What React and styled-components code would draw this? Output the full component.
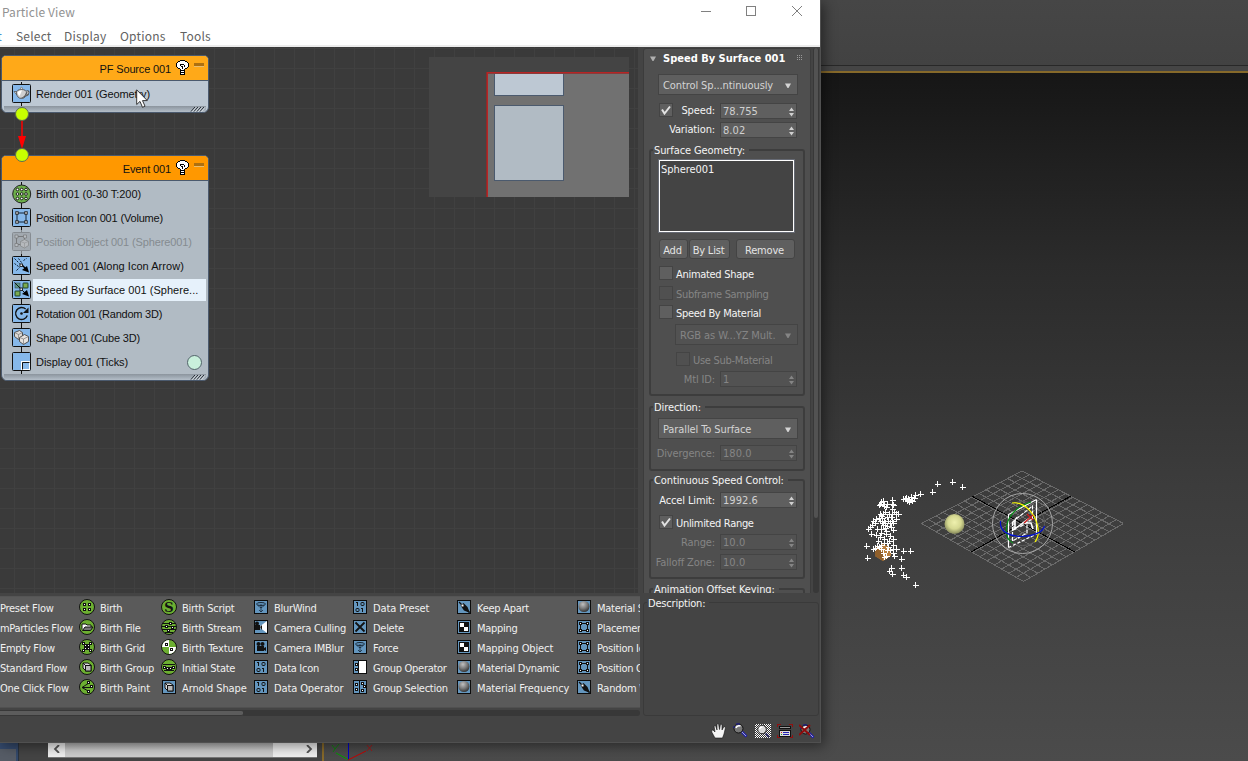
import React from "react";
import styled, { createGlobalStyle } from "styled-components";

const Global = createGlobalStyle`
  * { box-sizing: border-box; }
  html, body { margin: 0; padding: 0; overflow: hidden; background: #444; }
`;

const ui = `"DejaVu Sans Condensed", "Noto Sans", sans-serif`;

/* ---------- desktop behind the window ---------- */
const Desktop = styled.div`
  position: relative;
  width: 1248px;
  height: 761px;
  overflow: hidden;
  background: #444;
  display: flex;
  flex-direction: column;
`;
const TopStrip = styled.div`
  flex: none;
  height: 71px;
  background: linear-gradient(#464646 0, #424242 65px, #282828 65px, #282828 66px, #454545 66px);
`;
const Main = styled.div`
  flex: 1;
  display: flex;
  min-height: 0;
`;
const LeftDock = styled.div`
  width: 322px;
  display: flex;
  align-items: flex-end;
  background: #444;
`;
const DockPreview = styled.div`
  width: 18px;
  height: 18px;
  margin-right: 30px;
  background: #565c66;
  border: solid #34496b;
  border-width: 6px 2px 0 0;
  outline: 1px solid #28323f;
`;
const DockScroll = styled.div`
  width: 269px;
  height: 16px;
  margin-bottom: 4px;
  display: flex;
  background: #f0f0f0;
  box-shadow: 0 1px 0 #777;
`;
const DockArrow = styled.div`
  width: 17px;
  display: grid;
  place-items: center;
`;
const DockThumb = styled.div`
  width: 208px;
  background: linear-gradient(#aaa, #cdcdcd 9px);
`;
const DockTrack = styled.div`
  flex: 1;
`;
const Viewport = styled.div`
  flex: 1;
  border: solid #86692a;
  border-width: 2px 0 0 2px;
  background: linear-gradient(#161616, #2b2b2b 28%, #3c3c3c 60%, #4b4b4b);
`;

/* ---------- window ---------- */
const Window = styled.div`
  position: absolute;
  left: 0;
  top: 0;
  width: 821px;
  height: 743px;
  display: flex;
  flex-direction: column;
  background: #444;
  border-right: 1px solid #505050;
  border-bottom: 1px solid #505050;
  box-shadow: 3px 3px 12px rgba(0, 0, 0, 0.45);
  font-family: ${ui};
  font-size: 11px;
`;
const TitleBar = styled.div`
  height: 24px;
  background: #fff;
  display: flex;
  justify-content: space-between;
  padding-left: 2px;
  font: 12px/23px "Noto Sans CJK SC", "Noto Sans", sans-serif;
  color: #929292;
  letter-spacing: 0.1px;
`;
const WinButtons = styled.svg`
  width: 126px;
  height: 24px;
`;
const MenuBar = styled.div`
  height: 23px;
  background: #fff;
  border-bottom: 2px solid #ececec;
  display: flex;
  gap: 14px;
  font: 12px/24px "Noto Sans CJK SC", "Noto Sans", sans-serif;
  color: #626262;
  letter-spacing: 0.2px;
`;
const MenuItem = styled.span`
  width: ${(p) => p.$w}px;
  white-space: nowrap;
  display: flex;
  justify-content: ${(p) => p.$end ? "flex-end" : "flex-start"};
  color: ${(p) => p.$end ? "#4a90d0" : "inherit"};
`;
const Body = styled.div`
  height: 695px;
  display: flex;
`;
const LeftCol = styled.div`
  width: 640px;
  display: flex;
  flex-direction: column;
`;
const RightCol = styled.div`
  flex: 1;
  display: flex;
  flex-direction: column;
`;

/* ---------- event canvas ---------- */
const Canvas = styled.div`
  position: relative;
  width: 638px;
  height: 546px;
  overflow: hidden;
  background-color: #3a3a3a;
  background-image: linear-gradient(#404040 1px, transparent 1px), linear-gradient(90deg, #404040 1px, transparent 1px);
  background-size: 20px 20px;
  background-position: 14px 1px;
`;
const Node = styled.div`
  position: absolute;
  left: 1px;
  top: ${(p) => p.$y}px;
  width: 208px;
  border: 1px solid #4b5a6e;
  border-radius: 5px 5px 6px 6px;
  background: ${(p) => p.$bg};
  overflow: hidden;
  font: 11px "Liberation Sans", Arial, sans-serif;
  color: #111;
`;
const NodeHead = styled.div`
  height: 25px;
  display: flex;
  align-items: center;
  justify-content: flex-end;
  gap: 5px;
  padding: 0 4px 0 0;
  border-bottom: 1px solid #4b5a6e;
  background: ${(p) => p.$c};
`;
const NodeTitle = styled.span`
  padding-top: 2px;
  letter-spacing: -0.15px;
`;
const Collapse = styled.span`
  width: 10px;
  height: 4px;
  margin-bottom: 6px;
  background: linear-gradient(#ad7010 75%, #e8bd70 75%);
`;
const NodeRow = styled.div`
  height: 24px;
  display: flex;
  align-items: center;
  gap: 1px;
  padding-left: 10px;
  color: ${(p) => p.$off ? "#858b90" : "#111"};
`;
const NodeLabel = styled.span`
  height: 22px;
  line-height: 23px;
  padding-left: 3px;
  letter-spacing: ${(p) => p.$ls || 0}px;
  white-space: nowrap;
  flex: ${(p) => p.$sel ? "none" : 1};
  width: ${(p) => p.$sel ? "173px" : "auto"};
  background: ${(p) => p.$sel ? "#e6f1fb" : "transparent"};
`;
const ColorDot = styled.span`
  width: 15px;
  height: 15px;
  margin-right: 6px;
  border-radius: 50%;
  border: 1px solid #52646a;
  background: #c9f0dc;
`;
const NodeRows = styled.div`
  padding-top: 1px;
`;
const NodeFoot = styled.div`
  height: 6px;
  margin: 0 2px 0;
  background: linear-gradient(#8b949d, #a3adb7 60%, #b4bec8);
  display: flex;
  justify-content: flex-end;
`;
const Wire = styled.svg`
  position: absolute;
  left: 12px;
  top: 57px;
`;
const Pointer = styled.svg`
  position: absolute;
  left: 136px;
  top: 42px;
`;
const MiniMap = styled.svg`
  position: absolute;
  left: 429px;
  top: 10px;
`;

/* ---------- depot ---------- */
const Depot = styled.div`
  height: 112px;
  margin-top: 3px;
  padding-top: 1px;
  border-top: 1px solid #555;
  border-bottom: 1px solid #505050;
  background: #5a5a5a;
  overflow: hidden;
  display: grid;
  grid-template-columns: 79px 82px 92px 99px 104px 120px 64px;
  grid-auto-flow: column;
  grid-template-rows: repeat(5, 20px);
`;
const DepotItem = styled.div`
  display: flex;
  align-items: center;
  gap: 5px;
  overflow: hidden;
  white-space: nowrap;
  color: #f0f0f0;
`;
const DepotText = styled.span`
  letter-spacing: ${(p) => p.$wide ? -0.12 : -0.28}px;
`;
const DepotIcon = styled.svg`
  width: 16px;
  height: 16px;
  margin-bottom: 2px;
  flex: none;
`;
const HScroll = styled.div`
  height: 6px;
  margin-top: 2px;
  background: #383838;
  border-radius: 0 3px 3px 0;
`;
const HThumb = styled.div`
  width: 243px;
  height: 6px;
  border: solid #383838;
  border-width: 1px 0;
  border-radius: 0 2px 2px 0;
  background: #5c5c5c;
`;

/* ---------- rollouts ---------- */
const RollArea = styled.div`
  height: 546px;
  display: flex;
  gap: 2px;
  padding: 1px 1px 0 3px;
  overflow: hidden;
`;
const Rollout = styled.div`
  width: 168px;
  flex: none;
  height: 560px;
  padding: 0 5px;
  border: 1px solid #3c3c3c;
  border-radius: 3px;
  background: #4f4f4f;
  color: #f2f2f2;
  letter-spacing: -0.3px;
`;
const RollHead = styled.div`
  height: 20px;
  display: flex;
  align-items: center;
  padding: 0 2px 2px 1px;
  gap: 7px;
  color: #b0b0b0;
`;
const RollTitle = styled.span`
  flex: 1;
  white-space: nowrap;
  font-weight: bold;
  color: #fff;
  letter-spacing: 0;
`;
const VScroll = styled.div`
  width: 6px;
  height: 545px;
  background: #383838;
  border-radius: 3px;
`;
const VThumb = styled.div`
  height: 470px;
  margin: 0 1px;
  border-radius: 2px;
  background: #525252;
`;
const Line = styled.div`
  height: ${(p) => p.$h || 16}px;
  margin: ${(p) => p.$mt || 0}px 7px 0 ${(p) => p.$ml || 10}px;
  display: flex;
  align-items: center;
  gap: ${(p) => p.$gap ?? 4}px;
  white-space: nowrap;
  color: ${(p) => p.$off ? "#858585" : "#f4f4f4"};
`;
const Label = styled.span`
  flex: 1;
  text-align: right;
  letter-spacing: -0.13px;
  padding: 0 1px ${(p) => p.$up ? 2 : 0}px 0;
  margin-left: -4px;
`;
const FieldBox = styled.div`
  width: 77px;
  height: 16px;
  flex: none;
  display: flex;
  align-items: center;
  justify-content: space-between;
  padding: 1px 2px 0 2px;
  margin-right: 1px;
  border: 1px solid #444;
  background: ${(p) => p.$off ? "#525252" : "#5f5f5f"};
  color: ${(p) => p.$off ? "#858585" : "#d0d0d0"};
  letter-spacing: 0.05px;
`;
const SelectBox = styled.div`
  flex: 1;
  height: 21px;
  display: flex;
  align-items: center;
  justify-content: space-between;
  padding: 1px 6px 0 4px;
  border: 1px solid #444;
  background: ${(p) => p.$off ? "#525252" : "#5f5f5f"};
  color: ${(p) => p.$off ? "#858585" : "#d4d4d4"};
  letter-spacing: -0.1px;
`;
const CheckBox = styled.span`
  width: 14px;
  height: 14px;
  flex: none;
  margin-bottom: ${(p) => p.$up ? 2 : 0}px;
  border: 1px solid #444;
  background: ${(p) => p.$off ? "#505050" : "#5f5f5f"};
  display: grid;
  place-items: center;
`;
const CheckText = styled.span`
  padding-top: 2px;
`;
const Group = styled.div`
  height: ${(p) => p.$h}px;
  margin-top: ${(p) => p.$mt}px;
  border: 2px solid #3d3d3d;
  border-radius: 3px;
`;
const GroupTitle = styled.div`
  width: fit-content;
  height: 14px;
  line-height: 16px;
  margin: -8px 0 0 2px;
  padding: 0 4px 0 1px;
  white-space: nowrap;
  background: #4f4f4f;
  color: #f4f4f4;
  letter-spacing: -0.1px;
`;
const DescriptionTitle = styled(GroupTitle)`
  margin-left: 3px;
  line-height: 18px;
  background: #444;
  letter-spacing: -0.2px;
`;
const GroupBody = styled.div`
  margin: 0 -2px;
`;
const ListBox = styled.div`
  height: 74px;
  margin: 2px 10px 0 9px;
  padding: 2px 1px;
  border: 2px solid #fff;
  outline: 1px solid #666a74;
  outline-offset: -1px;
  background: #444;
  color: #f4f4f4;
  letter-spacing: -0.05px;
`;
const Button = styled.div`
  width: ${(p) => p.$w}px;
  height: 20px;
  flex: none;
  margin-right: ${(p) => p.$mr || 0}px;
  padding: 2px 2px 0 0;
  display: grid;
  place-items: center;
  border: 1px solid #444;
  border-radius: 3px;
  background: #5f5f5f;
  color: #e4e4e4;
  letter-spacing: -0.2px;
`;
const Description = styled.div`
  height: 114px;
  margin: 9px 1px 0 3px;
  border: 1px solid #3a3a3a;
  border-radius: 3px;
`;
const Tools = styled.div`
  display: flex;
  justify-content: flex-end;
  gap: 6px;
  padding: 7px 5px 0 0;
`;

/* ---------- small drawings ---------- */
const Bulb = () => (
  <svg width="13" height="16" viewBox="0 0 13 16" shapeRendering="crispEdges">
    <path d="M4 0H9V1H11V2H12V3H13V7H12V8H11V9H9V15H4V9H2V8H1V7H0V3H1V2H2V1H4Z" fill="#000" />
    <path d="M4 1H9V2H11V3H12V7H11V8H9V9H4V8H2V7H1V3H2V2H4Z" fill="#fff" />
    <path d="M5 9H8V10H5ZM5 11H8V12H5ZM5 13H8V14H5Z" fill="#fff" />
    <path d="M4 4H5V6H4ZM5 4H8V5H5ZM8 5H9V7H8ZM5 6H7V9H6V7H5Z" fill="#000" />
  </svg>
);
const Grip = () => (
  <svg width="16" height="6" viewBox="0 0 16 6">
    {[1, 4, 7, 10].map((x) => (
      <g key={x}>
        <path d={`M${x} 5.5L${x + 4} 1`} stroke="#222a33" strokeWidth="1" />
        <path d={`M${x + 1.2} 5.7L${x + 5.2} 1.2`} stroke="#e8edf2" strokeWidth=".8" />
      </g>
    ))}
  </svg>
);
const Corner = ({ x, y }) => <rect x={x - 1} y={y - 1} width="2.4" height="2.4" fill="#fff" stroke="#111" strokeWidth=".9" />;
const opArt = {
  render: (
    <g>
      <path d="M14.500 8.500C17.500 6.500 18 10 14.500 12" fill="none" stroke="#555" strokeWidth="2.200" />
      <path d="M14.500 8.500C17 7.200 17.300 10 14.500 11.500" fill="none" stroke="#e8e8e8" />
      <path d="M5.500 11.500L2.500 8H4.500L6.500 9Z" fill="#eee" stroke="#444" strokeWidth=".7" />
      <path d="M5 9.500C5 7 7 6 10 6S15 7 15 9.500C15 12.500 13 15 10 15S5 12.500 5 9.500Z" fill="#cfcfcf" stroke="#444" strokeWidth=".8" />
      <path d="M6 8.500Q8 6.500 10.500 7L8 12.500Q6 11 6 8.500Z" fill="#fff" />
      <path d="M9 14.500Q13 13.500 14.600 9Q15 15 9 14.500Z" fill="#555" />
      <path d="M7 6.500Q10 4.500 13 6.500Z" fill="#777" /><circle cx="10" cy="4.800" r="1" fill="#eee" stroke="#444" strokeWidth=".5" />
    </g>
  ),
  posicon: <g><path d="M5.500 5.500H14.500V14.500H5.500Z" fill="none" stroke="#123" /><Corner x={5.3} y={5.3} /><Corner x={14.3} y={5.3} /><Corner x={5.3} y={14.3} /><Corner x={14.3} y={14.3} /></g>,
  posobj: <g opacity=".7"><path d="M5 5H13V13H5Z" fill="none" stroke="#666" /><path d="M3.500 3.500h3v3h-3zM12 3.500h3v3h-3zM3.500 12h3v3h-3z" fill="#c4c8cc" stroke="#666" strokeWidth=".7" /><path d="M9 10L13 8L17 10V14L13 16.500L9 14.500Z" fill="#bfc1c3" stroke="#777" strokeWidth=".7" /><path d="M9 10L13 11.500L17 10M13 11.500V16" fill="none" stroke="#888" strokeWidth=".6" /></g>,
  speed: <g><path d="M3 3L8 8M7 3L10 7M3 8L7 11M12 5L15 3M5 15L8 12" stroke="#123" strokeDasharray="2 1" /><path d="M10 9L14 13" stroke="#000" strokeWidth="1.500" /><path d="M17.500 17L10.500 14.500L15.500 10.500Z" fill="#000" /><Corner x={9.5} y={9.5} /></g>,
  surf: <g><rect x="3.500" y="3.500" width="5" height="5" fill="#5d9a88" stroke="#345" strokeWidth=".6" /><rect x="11.500" y="3.500" width="5" height="5" rx=".5" fill="#7cab50" stroke="#132" strokeWidth=".9" /><rect x="3.500" y="11.500" width="5" height="5" rx=".5" fill="#7cab50" stroke="#132" strokeWidth=".9" /><path d="M3 3L14 14" stroke="#111" /><path d="M17.500 17L10.500 14.500L15.500 10.500Z" fill="#000" /><Corner x={9.5} y={9.5} /></g>,
  rot: <g><path d="M14.200 5.500A6 6 0 1 0 15.800 12" fill="none" stroke="#111" strokeWidth="1.400" /><path d="M17 4V9.500H11.500Z" fill="#111" /><circle cx="10" cy="10" r="1.300" fill="#111" /></g>,
  shape: <g><path d="M3 5L8 3L11 5V10L7 12L3 9Z" fill="#dedad6" stroke="#444" strokeWidth=".9" /><path d="M3 5L7 7L11 5M7 7V12" stroke="#777" fill="none" strokeWidth=".7" /><path d="M8 10L13 7L17 9V14L12 17L8 14Z" fill="#e6e2de" stroke="#444" strokeWidth=".9" /><path d="M8 10L12 11.500L17 9M12 11.500V17" stroke="#777" fill="none" strokeWidth=".7" /></g>,
  display: <g><rect x="10" y="10" width="8" height="8" fill="#8abaeb" stroke="#fff" /><path d="M11 18V11H18" fill="none" stroke="#111" /></g>,
};
const OpIcon = ({ kind }) => {
  const off = kind === "posobj";
  return (
    <svg width="20" height="24" viewBox="0 -2 20 24">
      <path d="M9.500 -2V1M9.500 19V22" stroke={off ? "#7d8286" : "#111"} />
      {kind === "birth" ? (
        <g>
          <circle cx="9.700" cy="10" r="9" fill="#6cae4a" stroke="#222" />
          {[5.5, 9.7, 14].flatMap((x) => [5.5, 10, 14.5].map((y) => <circle key={x + "-" + y} cx={x} cy={y} r="1.300" fill="#fff" stroke="#111" strokeWidth=".9" />))}
        </g>
      ) : (
        <g>
          <rect x=".5" y=".5" width="18" height="18" rx="1" fill={off ? "#a2a9b0" : "#86b8ea"} stroke={off ? "#868c92" : "#111"} />
          <g transform="translate(-.5 -.5)">{opArt[kind]}</g>
        </g>
      )}
    </svg>
  );
};

const sq = (x, y) => <rect key={x + "," + y} x={x} y={y} width="3" height="3" fill="#111" />;
const dot = (x, y) => <g key={x + "." + y}>{sq(x, y)}<rect x={x + 1} y={y + 1} width="1" height="1" fill="#fff" /></g>;
const cube = <g><path d="M4 4H9L12 6V12H7L4 9Z" fill="#ddd" stroke="#111" /><rect x="6.500" y="6.500" width="5.500" height="5.500" fill="#b8b8b8" stroke="#111" /><path d="M4 4L6.500 6.500" stroke="#111" /></g>;
const force = <g stroke="#182838" fill="none"><ellipse cx="8" cy="5" rx="4.500" ry="1.500" /><path d="M4.500 6L7 8.500H9L11.500 6M8 5V13M6 11L8 13L10 11" strokeWidth=".8" /></g>;
const bits = <g stroke="#111" fill="none"><path d="M5.500 3V7M4 3.500H5.500M10.500 9V13M9 9.500H10.500" /><rect x="9" y="3.500" width="3" height="3" rx=".8" /><rect x="4" y="9.500" width="3" height="3" rx=".8" /></g>;
const cam = <g fill="#111"><rect x="4" y="7" width="7" height="5" /><circle cx="5.500" cy="5" r="2" /><circle cx="9.500" cy="5" r="2" /><path d="M11 9L13 8V12L11 11Z" /></g>;
const arrow = <g><path d="M3 3L13.500 13.500" stroke="#111" strokeWidth="1.300" /><path d="M4.500 6.500L7.500 4L11.500 8L14 14L8 11.500Z" fill="#111" /><rect x="5.500" y="5.500" width="2" height="2" fill="#fff" /></g>;
const depotArt = {
  birth: [[4, 4], [9, 4], [4, 9], [9, 9]].map(([x, y]) => dot(x, y)),
  file: <g><path d="M3 10.500V5H7L8 6H12V8" fill="#fff" stroke="#111" /><path d="M3.500 11.500L6 8H14L11.500 11.500Z" fill="#777" stroke="#111" /></g>,
  grid: <g>{[[3, 3], [10, 3], [5, 5], [8, 5], [5, 8], [8, 8], [3, 10], [10, 10]].map(([x, y]) => dot(x, y))}</g>,
  cube,
  paint: <g><path d="M3 8.500L10 4M3 8.500H11M3 8.500L10 12.500" stroke="#111" />{dot(8, 2)}{dot(11, 6)}{dot(8, 11)}</g>,
  script: <text x="8" y="12.800" textAnchor="middle" fontFamily="DejaVu Serif, serif" fontWeight="bold" fontSize="13" fill="#111">S</text>,
  stream: <g><path d="M2 4.500H14M1 7.500H15M1 10.500H15M4 13.500H12" stroke="#111" />{dot(8, 3)}{dot(4, 6)}{dot(10, 7)}{dot(6, 10)}</g>,
  texture: <g><path d="M8 1A7 7 0 0 0 1 8H8ZM8 15A7 7 0 0 0 15 8H8Z" fill="#fff" />{dot(4, 4)}{dot(9, 9)}</g>,
  state: <g><path d="M2 5.500H14M2 8.500H14M3 11.500H13" stroke="#111" />{dot(2, 7)}{dot(5, 8)}{dot(8, 8)}{dot(11, 7)}</g>,
  force, bits, cam, arrow,
  cull: <g><path d="M6 8L14 2V14Z" fill="#fff" /><path d="M2 6H7V11H2Z" fill="#111" /><circle cx="4" cy="4.500" r="2" fill="#111" /><path d="M7 8L9 6V11Z" fill="#111" /></g>,
  del: <path d="M3.500 3.500L12.500 12.500M12.500 3.500L3.500 12.500" stroke="#111" strokeWidth="1.800" />,
  gop: <g><rect x="7" y="2" width="7" height="12" fill="#fff" /><path d="M6.500 1V15" stroke="#111" />{dot(3, 4)}{dot(3, 9)}</g>,
  gsel: <g><path d="M7.500 1V15" stroke="#111" />{dot(3, 4)}{dot(3, 9)}{dot(9, 3)}{dot(11, 6)}{dot(9, 10)}</g>,
  map: <g><rect x="3" y="3" width="10" height="10" fill="#111" /><rect x="4" y="4" width="4" height="4" fill="#fff" /><rect x="8" y="8" width="4" height="4" fill="#fff" /></g>,
  ball: <circle cx="8" cy="7.500" r="5.500" fill="url(#metal)" />,
  pos: <g><rect x="4.500" y="4.500" width="7" height="7" fill="none" stroke="#111" />{dot(3, 3)}{dot(10, 3)}{dot(3, 10)}{dot(10, 10)}</g>,
};
const DIcon = ({ kind, round }) => (
  <DepotIcon viewBox="0 0 16 16">
    {round ? <circle cx="8" cy="8" r="7.500" fill="#6cae31" stroke="#111" /> : <rect x="1.500" y="1.500" width="13" height="13" fill="#6496be" stroke="#0c0c0c" />}
    {depotArt[kind]}
  </DepotIcon>
);
const depot = [
  ["Preset Flow"], ["mParticles Flow"], ["Empty Flow"], ["Standard Flow"], ["One Click Flow"],
  ["Birth", "birth", 1], ["Birth File", "file", 1], ["Birth Grid", "grid", 1], ["Birth Group", "cube", 1], ["Birth Paint", "paint", 1],
  ["Birth Script", "script", 1], ["Birth Stream", "stream", 1], ["Birth Texture", "texture", 1], ["Initial State", "state", 1], ["Arnold Shape", "cube"],
  ["BlurWind", "force"], ["Camera Culling", "cull"], ["Camera IMBlur", "cam"], ["Data Icon", "bits"], ["Data Operator", "bits"],
  ["Data Preset", "bits"], ["Delete", "del"], ["Force", "force"], ["Group Operator", "gop"], ["Group Selection", "gsel"],
  ["Keep Apart", "arrow"], ["Mapping", "map"], ["Mapping Object", "map"], ["Material Dynamic", "ball"], ["Material Frequency", "ball"],
  ["Material Static", "ball"], ["Placement Paint", "pos"], ["Position Icon", "pos"], ["Position Object", "pos"], ["Random Walk", "arrow"],
];
const wideNames = new Set(["Birth Texture", "Arnold Shape", "Data Operator", "Data Preset", "Mapping Object", "Material Frequency", "Birth Paint"]);

const Spin = () => (
  <svg width="5" height="10" viewBox="0 0 5 10"><path d="M0 4L2.500 .5L5 4ZM0 6L2.500 9.500L5 6Z" fill="currentColor" /></svg>
);
const Down = () => (
  <svg width="6" height="5" viewBox="0 0 6 5"><path d="M0 .5H6L3.500 5H2.500Z" fill="currentColor" /></svg>
);
const Field = ({ label, value, off, mt, pre, up }) => (
  <Line $mt={mt} $off={off}>
    {pre}
    <Label $up={up}>{label}</Label>
    <FieldBox $off={off}>{value}<Spin /></FieldBox>
  </Line>
);
const Select = ({ text, off, mt, ml }) => (
  <Line $mt={mt} $h={21} $ml={ml || 9}>
    <SelectBox $off={off}>{text}<Down /></SelectBox>
  </Line>
);
const Tick = () => (
  <svg width="10" height="10" viewBox="0 0 10 10"><path d="M1 4.500L3.500 8.500L9 1.500" fill="none" stroke="#e2e2e2" strokeWidth="2" /></svg>
);
const Check = ({ label, on, off, mt, ml }) => (
  <Line $mt={mt} $ml={ml} $h={14} $off={off} $gap={3}>
    <CheckBox $off={off}>{on && <Tick />}</CheckBox>
    <CheckText>{label}</CheckText>
  </Line>
);

/* ---------- 3D viewport ---------- */
const marks = [
  [937, 484], [952, 482], [962, 487], [932, 492], [920, 494], [915, 495], [911, 497], [908, 499], [905, 499], [903, 499], [911, 500], [907, 501], [912, 501], [909, 502], [906, 498], [914, 498],
  [892, 500], [881, 502], [880, 504], [883, 504], [887, 504], [892, 504], [884, 506], [893, 505], [879, 505], [892, 509], [883, 501], [886, 507],
  [880, 514], [883, 514], [885, 512], [889, 514], [892, 514], [896, 514], [898, 514], [894, 512], [881, 516], [887, 517], [891, 517], [882, 518], [879, 518],
  [873, 521], [876, 519], [880, 521], [884, 521], [888, 521], [892, 521], [896, 519], [875, 523], [882, 523], [885, 523], [890, 523], [893, 523], [872, 525], [883, 525], [887, 526], [891, 527],
  [868, 529], [870, 527], [877, 529], [881, 529], [885, 528], [886, 531], [881, 533], [893, 530], [871, 534], [886, 534], [890, 536], [880, 537], [876, 535], [884, 539], [893, 539], [889, 541], [887, 543], [878, 541],
  [866, 546], [873, 549], [875, 548], [877, 546], [881, 545], [884, 543], [888, 547], [893, 545], [890, 550], [879, 547], [881, 549], [883, 553], [884, 557], [887, 550], [886, 556],
  [893, 549], [896, 549], [903, 551], [910, 551], [867, 558], [893, 553], [894, 556], [901, 559], [891, 568], [889, 571], [892, 574], [901, 568], [903, 575], [906, 577], [915, 585],
];
const mix = (a, b, t) => [a[0] + (b[0] - a[0]) * t, a[1] + (b[1] - a[1]) * t];
const L = [921.5, 523.5], T = [1022, 471], R = [1123.5, 523.5], B = [1023.5, 581.5];
const gridPath = Array.from({ length: 15 }, (_, i) => {
  const t = i / 14;
  const a = mix(L, T, t), b = mix(B, R, t), c = mix(T, R, t), d = mix(L, B, t);
  return `M${a}L${b}M${c}L${d}`;
}).join("");
const Scene = () => (
  <svg width="924" height="688" viewBox="324 73 924 688">
    <defs>
      <radialGradient id="ball" cx=".5" cy=".42" r=".6"><stop offset="0" stopColor="#eef0ae" /><stop offset=".55" stopColor="#d5d891" /><stop offset="1" stopColor="#7d8054" /></radialGradient>
      <radialGradient id="metal" cx=".4" cy=".3" r=".8"><stop offset="0" stopColor="#c0c0c0" /><stop offset=".5" stopColor="#777" /><stop offset="1" stopColor="#222" /></radialGradient>
    </defs>
    <path d={gridPath} stroke="#6a6a6a" fill="none" shapeRendering="crispEdges" />
    <path d="M972.500 496.500L1075 552M1071 496L971 552" stroke="#000" shapeRendering="crispEdges" />
    <circle cx="954.500" cy="524" r="10" fill="url(#ball)" />
    <path d="M875 548L883 543.500L891 548V556L883 561L875 556Z" fill="#b9803f" />
    <path d="M875 548L883 552V561L875 556Z" fill="#8f5f2b" />
    <path d={marks.map(([x, y]) => `M${x - 2} ${y + 0.5}h6M${x + 0.5} ${y - 3}v6`).join("")} stroke="#fff" shapeRendering="crispEdges" />
    <circle cx="1022.500" cy="523.500" r="30" fill="none" stroke="#a8a8a8" />
    <circle cx="1022.500" cy="523.500" r="22" fill="none" stroke="#5c5c5c" />
    <g fill="none" strokeWidth="1.200">
      <path d="M1036.500 499.500V534.500M1036.500 499.500L1008.500 514.500V547.500" stroke="#fff" />
      <path d="M1008.500 547.500L1036.500 534" stroke="#fff" strokeDasharray="3 2" />
      <path d="M1012.500 522L1032.500 506V520M1012.500 522V541L1027 533V524M1014 530V521L1018 516M1032 519L1020 527" stroke="#fff" strokeDasharray="4 1" />
      <path d="M1013 530L1030 518M1026 523H1031L1033 529M1015 520V530" stroke="#fff" strokeWidth="1.600" />
      <path d="M1031 502Q1014 507 1008 521Q1003 538 1013 543" stroke="#008b12" />
      <path d="M1012 503Q1024 501 1034 516Q1042 533 1035 542" stroke="#ff0" />
      <path d="M1000.500 521V525Q1003 536 1022 536.500Q1042 535 1044.500 526" stroke="#0010d0" />
      <path d="M1024 523L1033 515M1027 514L1033 520" stroke="#d01818" />
    </g>
    <path d="M348.500 741V760" stroke="#0000c8" />
    <path d="M348 759.500L336 753" stroke="#00a000" />
    <path d="M348 760L366 751" stroke="#c80000" />
    <path d="M332 745L335 749L339 744M335 749L333 752" stroke="#108010" fill="none" />
    <path d="M367 745L372 751M372 745L367 751" stroke="#a01818" />
  </svg>
);

const ToolIcon = styled.svg`
  width: 16px;
  height: 16px;
`;
const Lens = ({ x = 0, y = 0 }) => (
  <g transform={`translate(${x} ${y})`}>
    <circle cx="5.500" cy="5.500" r="4.500" fill="#777" stroke="#111" />
    <path d="M3 5Q4 2 7.500 3" stroke="#fff" strokeWidth="1.600" fill="none" />
    <path d="M3 1H7M1 3V5" stroke="#1818a0" />
    <path d="M9 9L13.500 13.500" stroke="#2020b0" strokeWidth="2.500" />
    <path d="M9 9L13 13" stroke="#ccc" strokeWidth=".8" />
  </g>
);

export default function App() {
  return (
    <>
      <Global />
      <Desktop>
        <TopStrip />
        <Main>
          <LeftDock>
            <DockPreview />
            <DockScroll>
              <DockArrow><svg width="8" height="8" viewBox="0 0 8 8"><path d="M6 0L2 4L6 8" stroke="#555" strokeWidth="1.800" fill="none" /></svg></DockArrow>
              <DockThumb />
              <DockTrack />
              <DockArrow><svg width="8" height="8" viewBox="0 0 8 8"><path d="M2 0L6 4L2 8" stroke="#555" strokeWidth="1.800" fill="none" /></svg></DockArrow>
            </DockScroll>
          </LeftDock>
          <Viewport><Scene /></Viewport>
        </Main>

        <Window>
          <TitleBar>
            Particle View
            <WinButtons viewBox="0 0 126 24" fill="none" stroke="#808080" shapeRendering="crispEdges">
              <path d="M7 11.500H17" />
              <rect x="52.500" y="6.500" width="9" height="9" />
              <path d="M98 6L108 16M108 6L98 16" shapeRendering="auto" />
            </WinButtons>
          </TitleBar>
          <MenuBar>
            <MenuItem $w={2} $end>t</MenuItem>
            <MenuItem $w={34}>Select</MenuItem>
            <MenuItem $w={42}>Display</MenuItem>
            <MenuItem $w={46}>Options</MenuItem>
            <MenuItem $w={36}>Tools</MenuItem>
          </MenuBar>
          <Body>
            <LeftCol>
              <Canvas>
                <Node $y={8} $bg="#bdc8d3">
                  <NodeHead $c="#ffa918"><NodeTitle>PF Source 001</NodeTitle><Bulb /><Collapse /></NodeHead>
                  <NodeRows>
                    <NodeRow><OpIcon kind="render" /><NodeLabel $ls={-0.1}>Render 001 (Geometry)</NodeLabel></NodeRow>
                  </NodeRows>
                  <NodeFoot><Grip /></NodeFoot>
                </Node>
                <Node $y={108} $bg="#b1bbc4">
                  <NodeHead $c="#ff9800"><NodeTitle>Event 001</NodeTitle><Bulb /><Collapse /></NodeHead>
                  <NodeRows>
                    <NodeRow><OpIcon kind="birth" /><NodeLabel $ls={-0.05}>Birth 001 (0-30 T:200)</NodeLabel></NodeRow>
                    <NodeRow><OpIcon kind="posicon" /><NodeLabel $ls={-0.17}>Position Icon 001 (Volume)</NodeLabel></NodeRow>
                    <NodeRow $off><OpIcon kind="posobj" /><NodeLabel $ls={-0.12}>Position Object 001 (Sphere001)</NodeLabel></NodeRow>
                    <NodeRow><OpIcon kind="speed" /><NodeLabel $ls={0.04}>Speed 001 (Along Icon Arrow)</NodeLabel></NodeRow>
                    <NodeRow><OpIcon kind="surf" /><NodeLabel $sel $ls={0.03}>Speed By Surface 001 (Sphere...</NodeLabel></NodeRow>
                    <NodeRow><OpIcon kind="rot" /><NodeLabel $ls={-0.22}>Rotation 001 (Random 3D)</NodeLabel></NodeRow>
                    <NodeRow><OpIcon kind="shape" /><NodeLabel $ls={-0.16}>Shape 001 (Cube 3D)</NodeLabel></NodeRow>
                    <NodeRow><OpIcon kind="display" /><NodeLabel $ls={-0.05}>Display 001 (Ticks)</NodeLabel><ColorDot /></NodeRow>
                  </NodeRows>
                  <NodeFoot><Grip /></NodeFoot>
                </Node>
                <Wire width="20" height="62" viewBox="0 0 20 62">
                  <path d="M10 16V40" stroke="#f00" strokeWidth="1.500" />
                  <path d="M6 32H14L10 45Z" fill="#f00" />
                  <circle cx="10" cy="10" r="6.500" fill="#c8ff00" stroke="#5d6b52" />
                  <circle cx="10" cy="51" r="6.500" fill="#c8ff00" stroke="#5d6b52" />
                </Wire>
                <MiniMap width="200" height="140" viewBox="0 0 200 140" shapeRendering="crispEdges">
                  <rect width="200" height="140" fill="#444" />
                  <rect x="58" y="16" width="142" height="124" fill="#717171" />
                  <rect x="65.500" y="16.500" width="69" height="22" fill="#bdc8d3" stroke="#4b5a6e" />
                  <rect x="65.500" y="48.500" width="69" height="75" fill="#b1bbc4" stroke="#4b5a6e" />
                  <rect x="58" y="15" width="142" height="1" fill="#b82424" />
                  <rect x="58" y="16" width="142" height="1" fill="#8a3a3a" />
                  <rect x="57" y="15" width="1" height="125" fill="#8a2c2c" />
                  <rect x="58" y="15" width="1" height="125" fill="#b82424" />
                </MiniMap>
                <Pointer width="13" height="20" viewBox="0 0 13 20">
                  <path d="M.7 .8V15.500L4 12.400L6.500 18.300L9 17.200L6.500 11.600H11.300Z" fill="#fff" stroke="#222" strokeWidth=".9" />
                </Pointer>
              </Canvas>
              <Depot>
                {depot.map(([name, kind, round]) => (
                  <DepotItem key={name}>
                    {kind && <DIcon kind={kind} round={round} />}
                    <DepotText $wide={wideNames.has(name)}>{name}</DepotText>
                  </DepotItem>
                ))}
              </Depot>
              <HScroll><HThumb /></HScroll>
            </LeftCol>

            <RightCol>
              <RollArea>
                <Rollout>
                  <RollHead>
                    <Down />
                    <RollTitle>Speed By Surface 001</RollTitle>
                    <svg width="6" height="6" viewBox="0 0 6 6" fill="#999" shapeRendering="crispEdges">
                      {[0, 2, 4].flatMap((x) => [0, 2, 4].map((y) => <rect key={x + "-" + y} x={x} y={y} width="1" height="1" />))}
                    </svg>
                  </RollHead>
                  <Select text="Control Sp...ntinuously" mt={5} />
                  <Field label="Speed:" value="78.755" mt={8} up pre={<CheckBox $up><Tick /></CheckBox>} />
                  <Field label="Variation:" value="8.02" mt={3} up />
                  <Group $h={247} $mt={11}>
                    <GroupTitle>Surface Geometry:</GroupTitle>
                    <GroupBody>
                      <ListBox>Sphere001</ListBox>
                      <Line $mt={6} $h={20} $gap={0}>
                        <Button $w={29} $mr={1}>Add</Button>
                        <Button $w={41} $mr={6}>By List</Button>
                        <Button $w={59}>Remove</Button>
                      </Line>
                      <Check label="Animated Shape" mt={7} />
                      <Check label="Subframe Sampling" off mt={6} />
                      <Check label="Speed By Material" mt={5} />
                      <Select text="RGB as W...YZ Mult." off mt={5} ml={26} />
                      <Check label="Use Sub-Material" off mt={7} ml={27} />
                      <Field label="Mtl ID:" value="1" off mt={5} />
                    </GroupBody>
                  </Group>
                  <Group $h={65} $mt={10}>
                    <GroupTitle>Direction:</GroupTitle>
                    <GroupBody>
                      <Select text="Parallel To Surface" mt={4} />
                      <Field label="Divergence:" value="180.0" off mt={6} />
                    </GroupBody>
                  </Group>
                  <Group $h={100} $mt={8}>
                    <GroupTitle>Continuous Speed Control:</GroupTitle>
                    <GroupBody>
                      <Field label="Accel Limit:" value="1992.6" mt={5} />
                      <Check label="Unlimited Range" on mt={7} />
                      <Field label="Range:" value="10.0" off mt={5} />
                      <Field label="Falloff Zone:" value="10.0" off mt={4} />
                    </GroupBody>
                  </Group>
                  <Group $h={60} $mt={9}>
                    <GroupTitle>Animation Offset Keying:</GroupTitle>
                  </Group>
                </Rollout>
                <VScroll><VThumb /></VScroll>
              </RollArea>
              <Description>
                <DescriptionTitle>Description:</DescriptionTitle>
              </Description>
              <Tools>
                <ToolIcon viewBox="0 0 16 16"><path d="M4 15L1 9.500L0.500 7.500L2 7L4 9L3 3L4.500 2.500L6 7L6 1L7.500 .5L8.500 6.500L9.500 1L11 1.500L11 7L13 3.500L14.500 4.500L13 11L11.500 15Z" fill="#f4f4f4" stroke="#111" strokeWidth=".6" /></ToolIcon>
                <ToolIcon viewBox="0 0 16 16"><Lens /></ToolIcon>
                <ToolIcon viewBox="0 0 16 16">
                  <defs><pattern id="chk" width="2" height="2" patternUnits="userSpaceOnUse"><rect width="2" height="2" fill="#333" /><path d="M0 0h1v1h-1zM1 1h1v1h-1z" fill="#fff" /></pattern></defs>
                  <rect x="0" y="1" width="16" height="14" fill="url(#chk)" shapeRendering="crispEdges" />
                  <circle cx="7" cy="6.500" r="4.300" fill="#d8d8d8" stroke="#222" /><path d="M4.500 6Q5 4 7.500 4" stroke="#fff" strokeWidth="1.400" fill="none" /><path d="M10.500 10.500L14 14" stroke="#333366" strokeWidth="2" />
                </ToolIcon>
                <ToolIcon viewBox="0 0 16 16" shapeRendering="crispEdges">
                  <path d="M.5 4V1.500H4M12 1.500H15.500V4M.5 12V14.500H3M13 14.500H15.500V12" stroke="#901010" fill="none" />
                  <rect x="2" y="3" width="12" height="3" fill="#111" /><rect x="3" y="4" width="10" height="1" fill="#999" />
                  <rect x="2" y="7" width="12" height="7" fill="#111" /><rect x="3" y="8" width="10" height="5" fill="#ddd" />
                  <path d="M6 9.500H12M6 11.500H12" stroke="#2020b0" /><path d="M4 9.500H5" stroke="#c22" /><path d="M4 11.500H5" stroke="#2a2" />
                </ToolIcon>
                <ToolIcon viewBox="0 0 16 16"><Lens x={1} y={1} /><path d="M0 2L11 12M11 2L0 12" stroke="#900c0c" strokeWidth="2" /></ToolIcon>
              </Tools>
            </RightCol>
          </Body>
        </Window>
      </Desktop>
    </>
  );
}
